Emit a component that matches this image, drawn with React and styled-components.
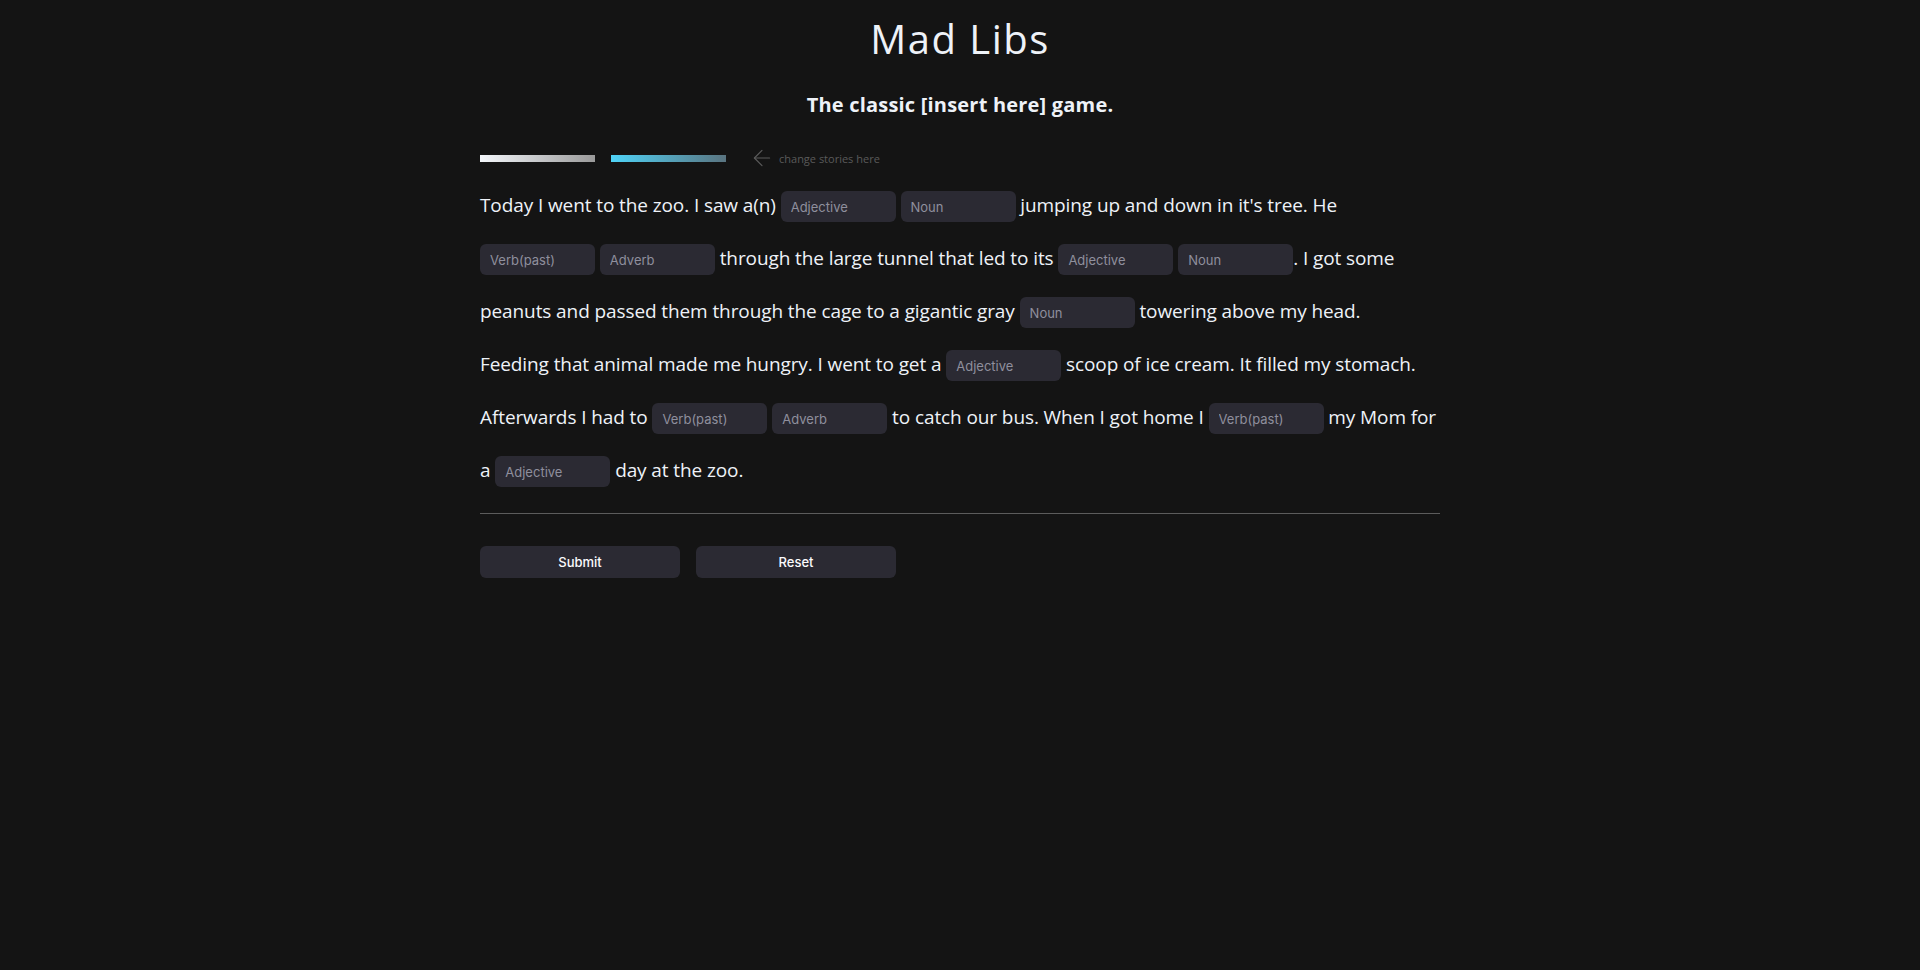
import styled, { createGlobalStyle } from 'styled-components';
import { ArrowLeft } from 'lucide-react';

const GlobalStyle = createGlobalStyle`
  html, body {
    margin: 0;
    padding: 0;
    background-color: #141414;
  }
  body {
    font-family: "Open Sans", "DejaVu Sans", sans-serif;
    color: #eef2f8;
  }
`;

const Container = styled.div`
  width: 960px;
  margin: 0 auto;
  padding-top: 14px;
`;

const Title = styled.h1`
  margin: 0;
  font-size: 40px;
  font-weight: 500;
  letter-spacing: 1.5px;
  line-height: 50px;
  text-align: center;
`;

const Subtitle = styled.h2`
  margin: 29px 0 0;
  font-size: 20px;
  font-weight: 700;
  letter-spacing: 0.2px;
  line-height: 24px;
  text-align: center;
`;

const StoryBar = styled.div`
  display: flex;
  align-items: center;
  height: 20px;
  margin-top: 31px;
`;

const StoryTab = styled.div`
  width: 115px;
  height: 7px;
  margin-right: 16px;
  background: ${(props) =>
    props.active
      ? 'linear-gradient(90deg, #4fd3f7, #5a7480)'
      : 'linear-gradient(90deg, #f4f7fb, #9a9a9a)'};
`;

const Hint = styled.div`
  display: flex;
  align-items: center;
  margin-left: 7px;
  color: #5a5a5a;
  font-size: 11px;
  gap: 4px;
`;

const Story = styled.p`
  margin: 11px 0 0;
  font-size: 19px;
  font-weight: 500;
  letter-spacing: -0.1px;
  line-height: 53px;
`;

const Blank = styled.input`
  width: 115px;
  height: 31px;
  box-sizing: border-box;
  padding: 0 10px;
  border: none;
  border-radius: 6px;
  background-color: #2b2a33;
  color: #fbfbfe;
  font-family: Inter, "Liberation Sans", sans-serif;
  font-size: 13px;
  letter-spacing: 0;
  vertical-align: middle;
  outline: none;
  &::placeholder {
    color: #8f8f9d;
  }
`;

const Hr = styled.hr`
  margin: 16px 0 0;
  border: none;
  height: 1px;
  background-color: #5c5c5c;
`;

const Actions = styled.div`
  display: flex;
  gap: 16px;
  margin-top: 32px;
`;

const Button = styled.button`
  width: 200px;
  height: 32px;
  border: none;
  border-radius: 6px;
  background-color: #2b2a33;
  color: #fbfbfe;
  font-family: Inter, "Liberation Sans", sans-serif;
  font-size: 13px;
  font-weight: 500;
  cursor: pointer;
`;

const App = () => {
  return (
    <Container>
      <GlobalStyle />
      <Title>Mad Libs</Title>
      <Subtitle>The classic [insert here] game.</Subtitle>
      <StoryBar>
        <StoryTab />
        <StoryTab active />
        <Hint>
          <ArrowLeft size={26} strokeWidth={1.1} />
          change stories here
        </Hint>
      </StoryBar>
      <Story>
        Today I went to the zoo. I saw a(n) <Blank placeholder="Adjective" />{' '}
        <Blank placeholder="Noun" /> jumping up and down in it's tree. He
        <br />
        <Blank placeholder="Verb(past)" /> <Blank placeholder="Adverb" /> through
        the large tunnel that led to its <Blank placeholder="Adjective" />{' '}
        <Blank placeholder="Noun" />. I got some
        <br />
        peanuts and passed them through the cage to a gigantic gray{' '}
        <Blank placeholder="Noun" /> towering above my head.
        <br />
        Feeding that animal made me hungry. I went to get a{' '}
        <Blank placeholder="Adjective" /> scoop of ice cream. It filled my stomach.
        <br />
        Afterwards I had to <Blank placeholder="Verb(past)" />{' '}
        <Blank placeholder="Adverb" /> to catch our bus. When I got home I{' '}
        <Blank placeholder="Verb(past)" /> my Mom for
        <br />a <Blank placeholder="Adjective" /> day at the zoo.
      </Story>
      <Hr />
      <Actions>
        <Button>Submit</Button>
        <Button>Reset</Button>
      </Actions>
    </Container>
  );
};

export default App;
